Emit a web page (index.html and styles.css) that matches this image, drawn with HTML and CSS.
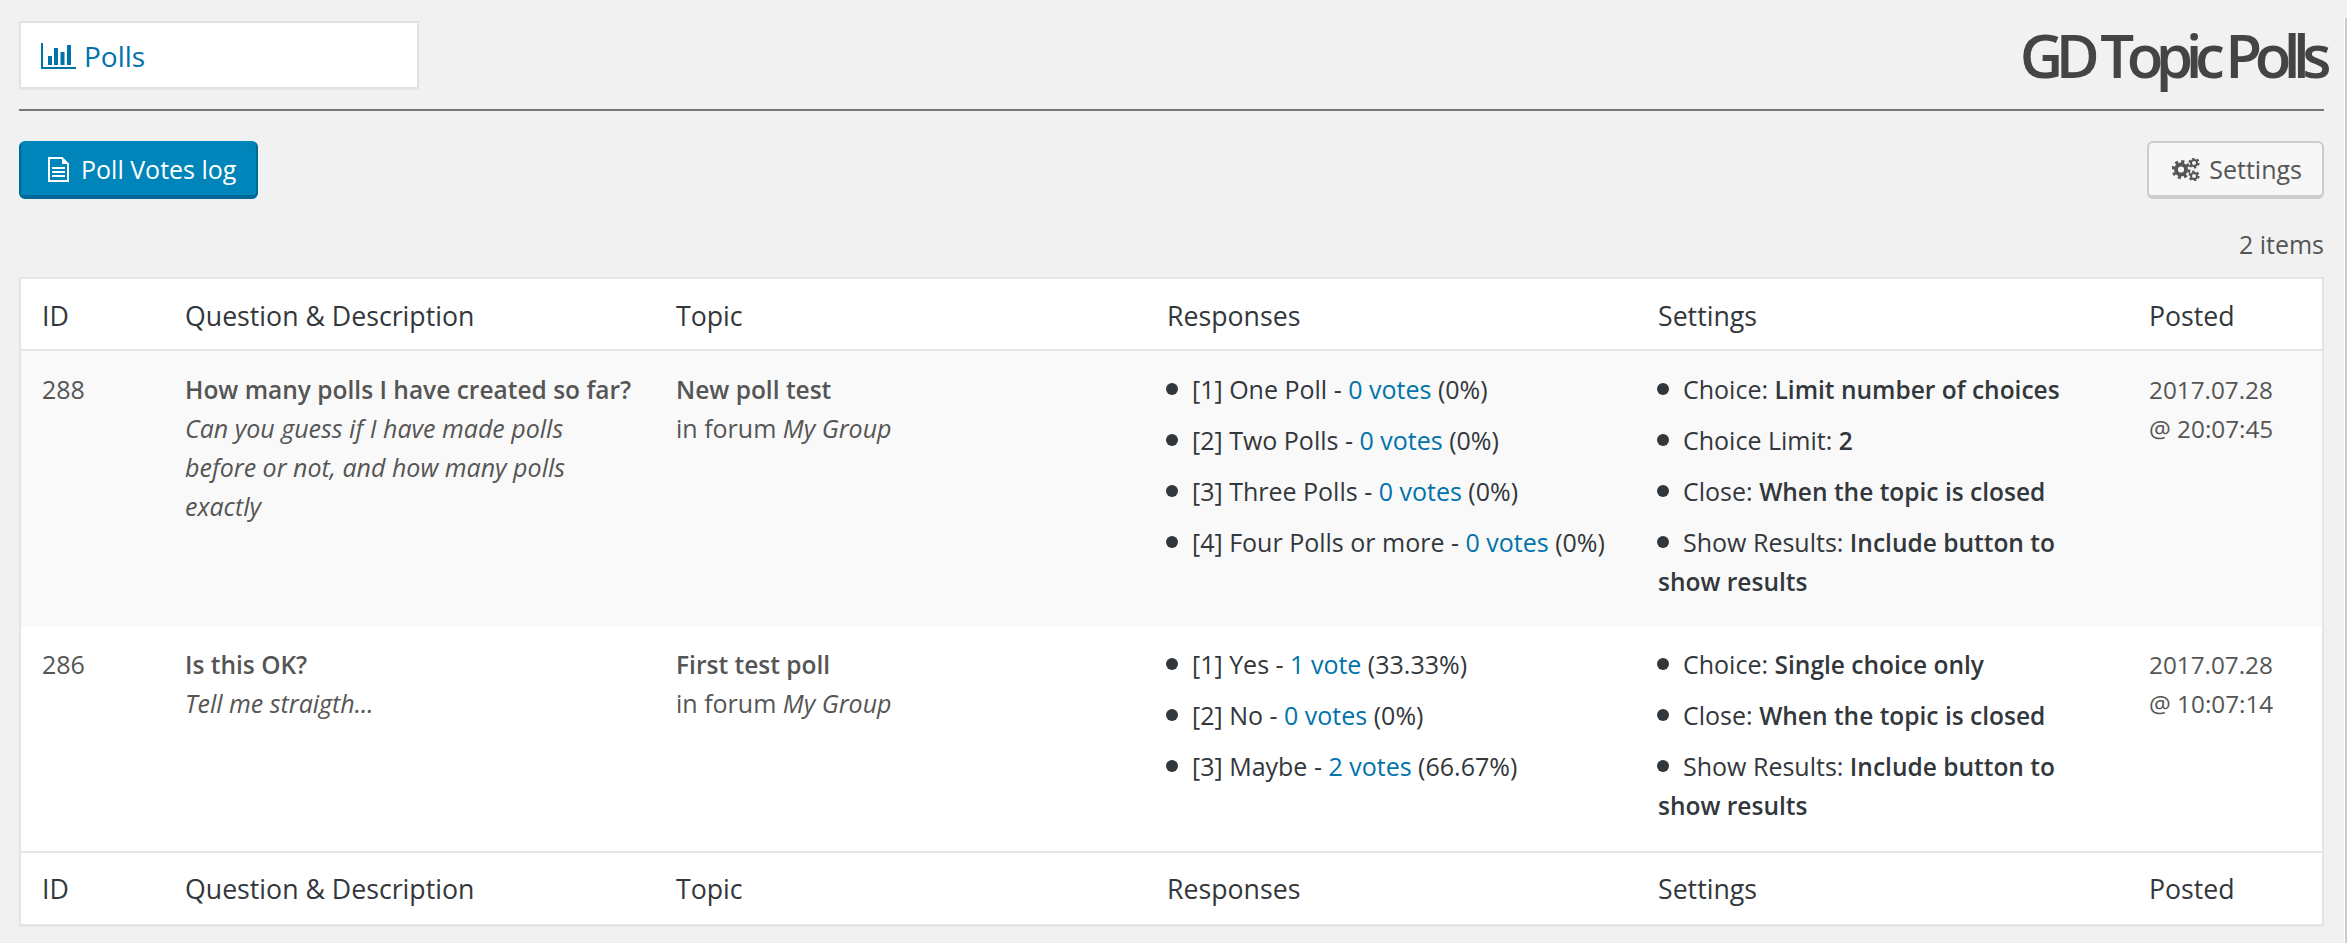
FILE: index.html
```html
<!DOCTYPE html>
<html lang="en">
<head>
<meta charset="utf-8">
<title>GD Topic Polls</title>
<link rel="stylesheet" href="styles.css">
</head>
<body>
<div class="wrap">
  <header class="top">
    <a class="panel" href="#">
      <svg class="i-chart" viewBox="0 0 35 26"><path d="M1 0V25H35" fill="none" stroke="currentColor" stroke-width="2"/><path d="M7 13h4v9H7zM13 5h4v17h-4zM19.500 9h4v13h-4zM26 2h4v20h-4z" fill="currentColor"/></svg>
      <span>Polls</span>
    </a>
    <div class="brand">GD Topic Polls</div>
  </header>
  <div class="actions">
    <a class="btn primary" href="#">
      <svg class="i-file" viewBox="0 0 21 25"><path d="M1 1h13l6 6v17H1z" fill="none" stroke="currentColor" stroke-width="2"/><path d="M14 1v6h6z" fill="currentColor"/><path d="M4 10h13v2H4zM4 14h13v2H4zM4 18h13v2H4z" fill="currentColor"/></svg>
      <span>Poll Votes log</span>
    </a>
    <a class="btn" href="#">
      <svg class="i-gears" viewBox="0 0 28 23" fill="none" stroke="currentColor">
        <circle cx="9" cy="11.500" r="5" stroke-width="3.800"/>
        <circle cx="9" cy="11.500" r="8" stroke-width="3" stroke-dasharray="3.140 3.140"/>
        <circle cx="22" cy="5" r="3" stroke-width="2"/>
        <circle cx="22" cy="5" r="4.700" stroke-width="1.800" stroke-dasharray="2.460 2.460"/>
        <circle cx="22" cy="18" r="3" stroke-width="2"/>
        <circle cx="22" cy="18" r="4.700" stroke-width="1.800" stroke-dasharray="2.460 2.460"/>
      </svg>
      <span>Settings</span>
    </a>
  </div>
  <div class="count">2 items</div>
  <table class="polls">
    <thead>
      <tr><th class="c-id">ID</th><th class="c-wide">Question &amp; Description</th><th class="c-wide">Topic</th><th class="c-wide">Responses</th><th class="c-wide">Settings</th><th>Posted</th></tr>
    </thead>
    <tbody>
      <tr class="alt">
        <td>288</td>
        <td><strong>How many polls I have created so far?</strong><br><em>Can you guess if I have made polls<br>before or not, and how many polls<br>exactly</em></td>
        <td><strong>New poll test</strong><br>in forum <em>My Group</em></td>
        <td><ul>
          <li>[1] One Poll - <a href="#">0 votes</a> (0%)</li>
          <li>[2] Two Polls - <a href="#">0 votes</a> (0%)</li>
          <li>[3] Three Polls - <a href="#">0 votes</a> (0%)</li>
          <li>[4] Four Polls or more - <a href="#">0 votes</a> (0%)</li>
        </ul></td>
        <td><ul>
          <li>Choice: <b>Limit number of choices</b></li>
          <li>Choice Limit: <b>2</b></li>
          <li>Close: <b>When the topic is closed</b></li>
          <li>Show Results: <b>Include button to</b> <b>show results</b></li>
        </ul></td>
        <td class="date">2017.07.28<br>@ 20:07:45</td>
      </tr>
      <tr>
        <td>286</td>
        <td><strong>Is this OK?</strong><br><em>Tell me straigth...</em></td>
        <td><strong>First test poll</strong><br>in forum <em>My Group</em></td>
        <td><ul>
          <li>[1] Yes - <a href="#">1 vote</a> (33.33%)</li>
          <li>[2] No - <a href="#">0 votes</a> (0%)</li>
          <li>[3] Maybe - <a href="#">2 votes</a> (66.67%)</li>
        </ul></td>
        <td><ul>
          <li>Choice: <b>Single choice only</b></li>
          <li>Close: <b>When the topic is closed</b></li>
          <li>Show Results: <b>Include button to</b> <b>show results</b></li>
        </ul></td>
        <td class="date">2017.07.28<br>@ 10:07:14</td>
      </tr>
    </tbody>
    <tfoot>
      <tr><th>ID</th><th>Question &amp; Description</th><th>Topic</th><th>Responses</th><th>Settings</th><th>Posted</th></tr>
    </tfoot>
  </table>
</div>
<div class="edge"></div>
</body>
</html>
```

FILE: styles.css
```css
* { box-sizing: border-box; }
html, body { margin: 0; height: 100%; }
body {
  position: relative;
  background: #f1f1f1;
  color: #444;
  font-family: "Open Sans", "Noto Sans", sans-serif;
  font-size: 25px;
  line-height: 39px;
  overflow: hidden;
}
a { color: #0073aa; text-decoration: none; }
.wrap { padding: 21px 23px 0 19px; }
.edge {
  position: absolute;
  top: 18px;
  right: 0;
  bottom: 0;
  width: 3px;
  background: #ccc;
  border-left: 1px solid #fff;
}
.top {
  display: flex;
  justify-content: space-between;
  align-items: flex-start;
  height: 90px;
  border-bottom: 2px solid #777;
}
.panel {
  width: 400px;
  height: 68px;
  background: #fff;
  border: 2px solid #e2e2e2;
  box-shadow: 0 1px 1px rgba(0,0,0,.04);
  display: flex;
  align-items: center;
  gap: 8px;
  padding: 2px 0 0 20px;
  font-size: 28px;
}
.i-chart { width: 35px; height: 26px; }
.brand {
  font-size: 60px;
  line-height: 70px;
  font-weight: 600;
  letter-spacing: -7.500px;
  color: #444;
  margin-top: -1px;
}
.actions {
  display: flex;
  justify-content: space-between;
  margin-top: 30px;
}
.btn {
  height: 58px;
  border: 2px solid #ccc;
  border-bottom-width: 4px;
  border-radius: 6px;
  background: #f7f7f7;
  color: #555;
  display: flex;
  align-items: center;
  gap: 9px;
  padding: 0 20px 0 23px;
  font-size: 25px;
}
.btn.primary {
  background: #0085ba;
  border-color: #0085ba #006799 #006799;
  color: #fff;
  gap: 12px;
  padding: 0 20px 0 27px;
}
.i-file { width: 21px; height: 25px; }
.i-gears { width: 28px; height: 23px; }
.count {
  text-align: right;
  margin-top: 26px;
  height: 39px;
  color: #555;
}
.polls {
  width: 2305px;
  table-layout: fixed;
  border-collapse: separate;
  border-spacing: 0;
  background: #fff;
  border: 2px solid #e5e5e5;
  margin-top: 13px;
  box-shadow: 0 1px 1px rgba(0,0,0,.04);
}
.c-id { width: 143px; }
.c-wide { width: 491px; }
th {
  text-align: left;
  font-weight: 400;
  font-size: 26.700px;
  color: #32373c;
  height: 72px;
  padding: 0 21px;
}
thead th { border-bottom: 2px solid #e5e5e5; padding-top: 2px; }
tfoot th { border-top: 2px solid #e5e5e5; height: 73px; }
td {
  vertical-align: top;
  padding: 18px 21px 26px;
  font-size: 25px;
  line-height: 39px;
  color: #555;
}
.date { font-size: 24.300px; }
.alt td { background: #f9f9f9; padding-top: 19px; }
strong { font-weight: 600; font-size: 24.500px; }
ul { list-style: none; margin: 0; padding: 0; color: #32373c; }
li { margin: 0 0 12px; }
li:last-child { margin-bottom: 0; }
li::before {
  content: "";
  display: inline-block;
  width: 12px;
  height: 12px;
  border-radius: 50%;
  background: #32373c;
  margin: 0 14px 4px -1px;
}
b { font-weight: 600; font-size: 24.500px; }
```
